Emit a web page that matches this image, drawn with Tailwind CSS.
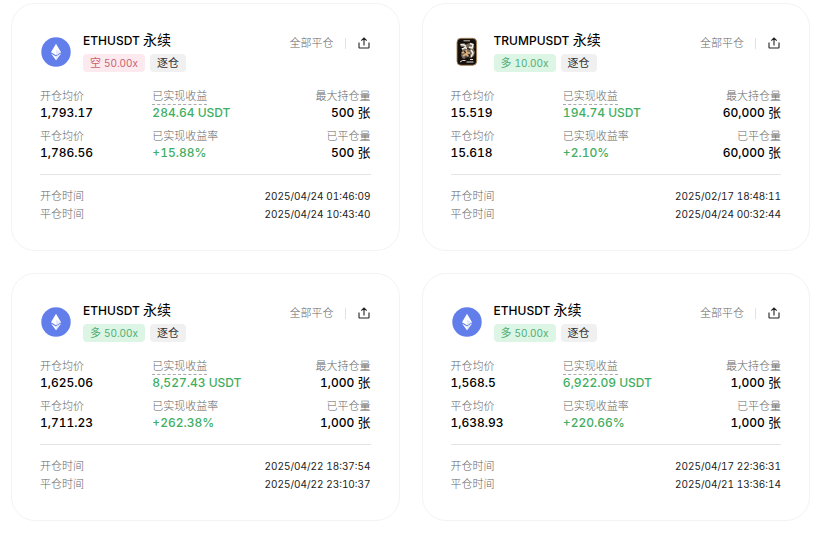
<!DOCTYPE html>
<html lang="zh-CN">
<head>
  <meta charset="UTF-8">
  <meta name="viewport" content="width=device-width, initial-scale=1">
  <title>历史仓位</title>
  <script src="https://cdn.jsdelivr.net/npm/@tailwindcss/browser@4"></script>
</head>
<body class="bg-white font-[Inter,'Noto_Sans_CJK_SC',sans-serif] text-black tabular-nums">
  <main id="positions" class="grid grid-cols-2 gap-[22px] pt-[3px] pl-[11px] pr-5 pb-5"></main>

  <script>
    const icons = {
      eth: `
        <svg viewBox="0 0 30 30" class="size-[30px]" aria-hidden="true">
          <circle cx="15" cy="15" r="14.7" fill="#627eea"/>
          <path d="M15 6.8 20 15.2 15 18.2 10 15.2Z" fill="#fff"/>
          <path d="M15 12.8V18.2L20 15.2Z" fill="#e3e8fc"/>
          <path d="M10 16.4 15 19.4 20 16.4 15 23.2Z" fill="#fff"/>
          <path d="M15 19.4 20 16.4 15 23.2Z" fill="#e3e8fc"/>
        </svg>`,
      trump: `
        <svg viewBox="0 0 30 30" class="size-[30px]" aria-hidden="true">
          <rect x="5" y="1.3" width="19.6" height="27" rx="4" fill="#15100c" stroke="#a98659" stroke-width="0.9"/>
          <path d="M11.5 3.8h6.5" stroke="#c9c3b8"/>
          <path d="M8 7l4-1 2 1.5 3-1.5 4 1 1.5 3-1 2 1.5 3-1 4-3 2-3-1-4 2-2-1-1-3 1.5-3-1-4z" fill="#77685a"/>
          <path d="M8.5 7.5l3.5.5 2 1.5M18 6.5l3 1-1 3.5-3-1M10 12l3-1.5 2 1M19 13l2 3-2 4" stroke="#f4f1ea" stroke-width="1.5" fill="none"/>
          <path d="M9.5 15.5h3M14 13l1 3h3M11 19l3-2 2 2" stroke="#dcb47c" stroke-width="1.6" fill="none"/>
          <path d="M12 14.5l2 1M15 11l3 1.5M17 17l1 3M8.5 10.5h3M14 19.5v2" stroke="#15100c"/>
          <path d="M8 25l2.5-1.5h3M14.5 25h7M18 22.5h3" stroke="#e2ddd3" fill="none"/>
        </svg>`
    };

    const badge = {
      空: 'bg-[#fdeaee] text-[#c9606e]',
      多: 'bg-[#dcf5e5] text-[#4fae73]'
    };

    const positions = [
      { icon: 'eth', symbol: 'ETHUSDT', side: '空', lever: '50.00x', open: '1,793.17', close: '1,786.56', pnl: '284.64', rate: '+15.88%', size: '500', openTime: '2025/04/24 01:46:09', closeTime: '2025/04/24 10:43:40' },
      { icon: 'trump', symbol: 'TRUMPUSDT', side: '多', lever: '10.00x', open: '15.519', close: '15.618', pnl: '194.74', rate: '+2.10%', size: '60,000', openTime: '2025/02/17 18:48:11', closeTime: '2025/04/24 00:32:44' },
      { icon: 'eth', symbol: 'ETHUSDT', side: '多', lever: '50.00x', open: '1,625.06', close: '1,711.23', pnl: '8,527.43', rate: '+262.38%', size: '1,000', openTime: '2025/04/22 18:37:54', closeTime: '2025/04/22 23:10:37' },
      { icon: 'eth', symbol: 'ETHUSDT', side: '多', lever: '50.00x', open: '1,568.5', close: '1,638.93', pnl: '6,922.09', rate: '+220.66%', size: '1,000', openTime: '2025/04/17 22:36:31', closeTime: '2025/04/21 13:36:14' }
    ];

    const label = 'h-4 text-[11px] leading-4 font-light text-[#666]';
    const value = 'h-[18px] text-[12px] leading-[18px] font-medium';
    const green = 'h-[18px] text-[12px] leading-[18px] font-medium text-[#3fae62]';

    const card = (p) => `
      <article class="rounded-[24px] border border-[#f3f3f3] px-7 pt-7 pb-[27px]">
        <header class="flex items-start">
          <div class="flex h-10 items-center pl-px">${icons[p.icon]}</div>
          <div class="ml-3 flex flex-col gap-1">
            <h2 class="h-[18px] text-[12px] leading-[18px] font-medium">${p.symbol} <span class="text-[14px] leading-none font-normal">永续</span></h2>
            <div class="flex gap-[5px] text-[11px] leading-[18px]">
              <span class="h-[18px] rounded-[4px] px-[7px] ${badge[p.side]}">${p.side} <span class="text-[10px]">${p.lever}</span></span>
              <span class="h-[18px] rounded-[4px] bg-[#f0f0f0] px-[7px] text-[#333]">逐仓</span>
            </div>
          </div>
          <div class="ml-auto flex h-[22px] items-center">
            <span class="text-[11px] font-light text-[#666]">全部平仓</span>
            <span class="ml-[11px] h-[11px] w-px bg-[#e2e2e2]"></span>
            <button type="button" aria-label="分享" class="ml-3 mr-px">
              <svg viewBox="0 0 12 12" class="size-3" fill="none" stroke="#222" stroke-width="1.1">
                <path d="M1 5.5V10.5Q1 11 1.5 11H10.5Q11 11 11 10.5V5.5M6 8.5V1.2M3.3 3.7 6 1l2.7 2.7"/>
              </svg>
            </button>
          </div>
        </header>
        <dl class="mt-4 grid grid-cols-[34%_1fr_auto] gap-y-1.5">
          <div>
            <dt class="${label}">开仓均价</dt>
            <dd class="${value}">${p.open}</dd>
          </div>
          <div>
            <dt class="${label}"><span class="inline-block h-[17px] border-b border-dashed border-[#aaa]">已实现收益</span></dt>
            <dd class="${green}">${p.pnl} USDT</dd>
          </div>
          <div class="text-right">
            <dt class="${label}">最大持仓量</dt>
            <dd class="${value}">${p.size} <span class="text-[13px] leading-none font-normal">张</span></dd>
          </div>
          <div>
            <dt class="${label}">平仓均价</dt>
            <dd class="${value}">${p.close}</dd>
          </div>
          <div>
            <dt class="${label}">已实现收益率</dt>
            <dd class="${green}">${p.rate}</dd>
          </div>
          <div class="text-right">
            <dt class="${label}">已平仓量</dt>
            <dd class="${value}">${p.size} <span class="text-[13px] leading-none font-normal">张</span></dd>
          </div>
        </dl>
        <dl class="mt-3 border-t border-[#e4e4e4] pt-3 text-[11px] leading-[18px]">
          <div class="flex justify-between">
            <dt class="font-light text-[#666]">开仓时间</dt>
            <dd class="text-[10px] text-[#222]">${p.openTime}</dd>
          </div>
          <div class="flex justify-between">
            <dt class="font-light text-[#666]">平仓时间</dt>
            <dd class="text-[10px] text-[#222]">${p.closeTime}</dd>
          </div>
        </dl>
      </article>`;

    document.getElementById('positions').innerHTML = positions.map(card).join('');
  </script>
</body>
</html>
